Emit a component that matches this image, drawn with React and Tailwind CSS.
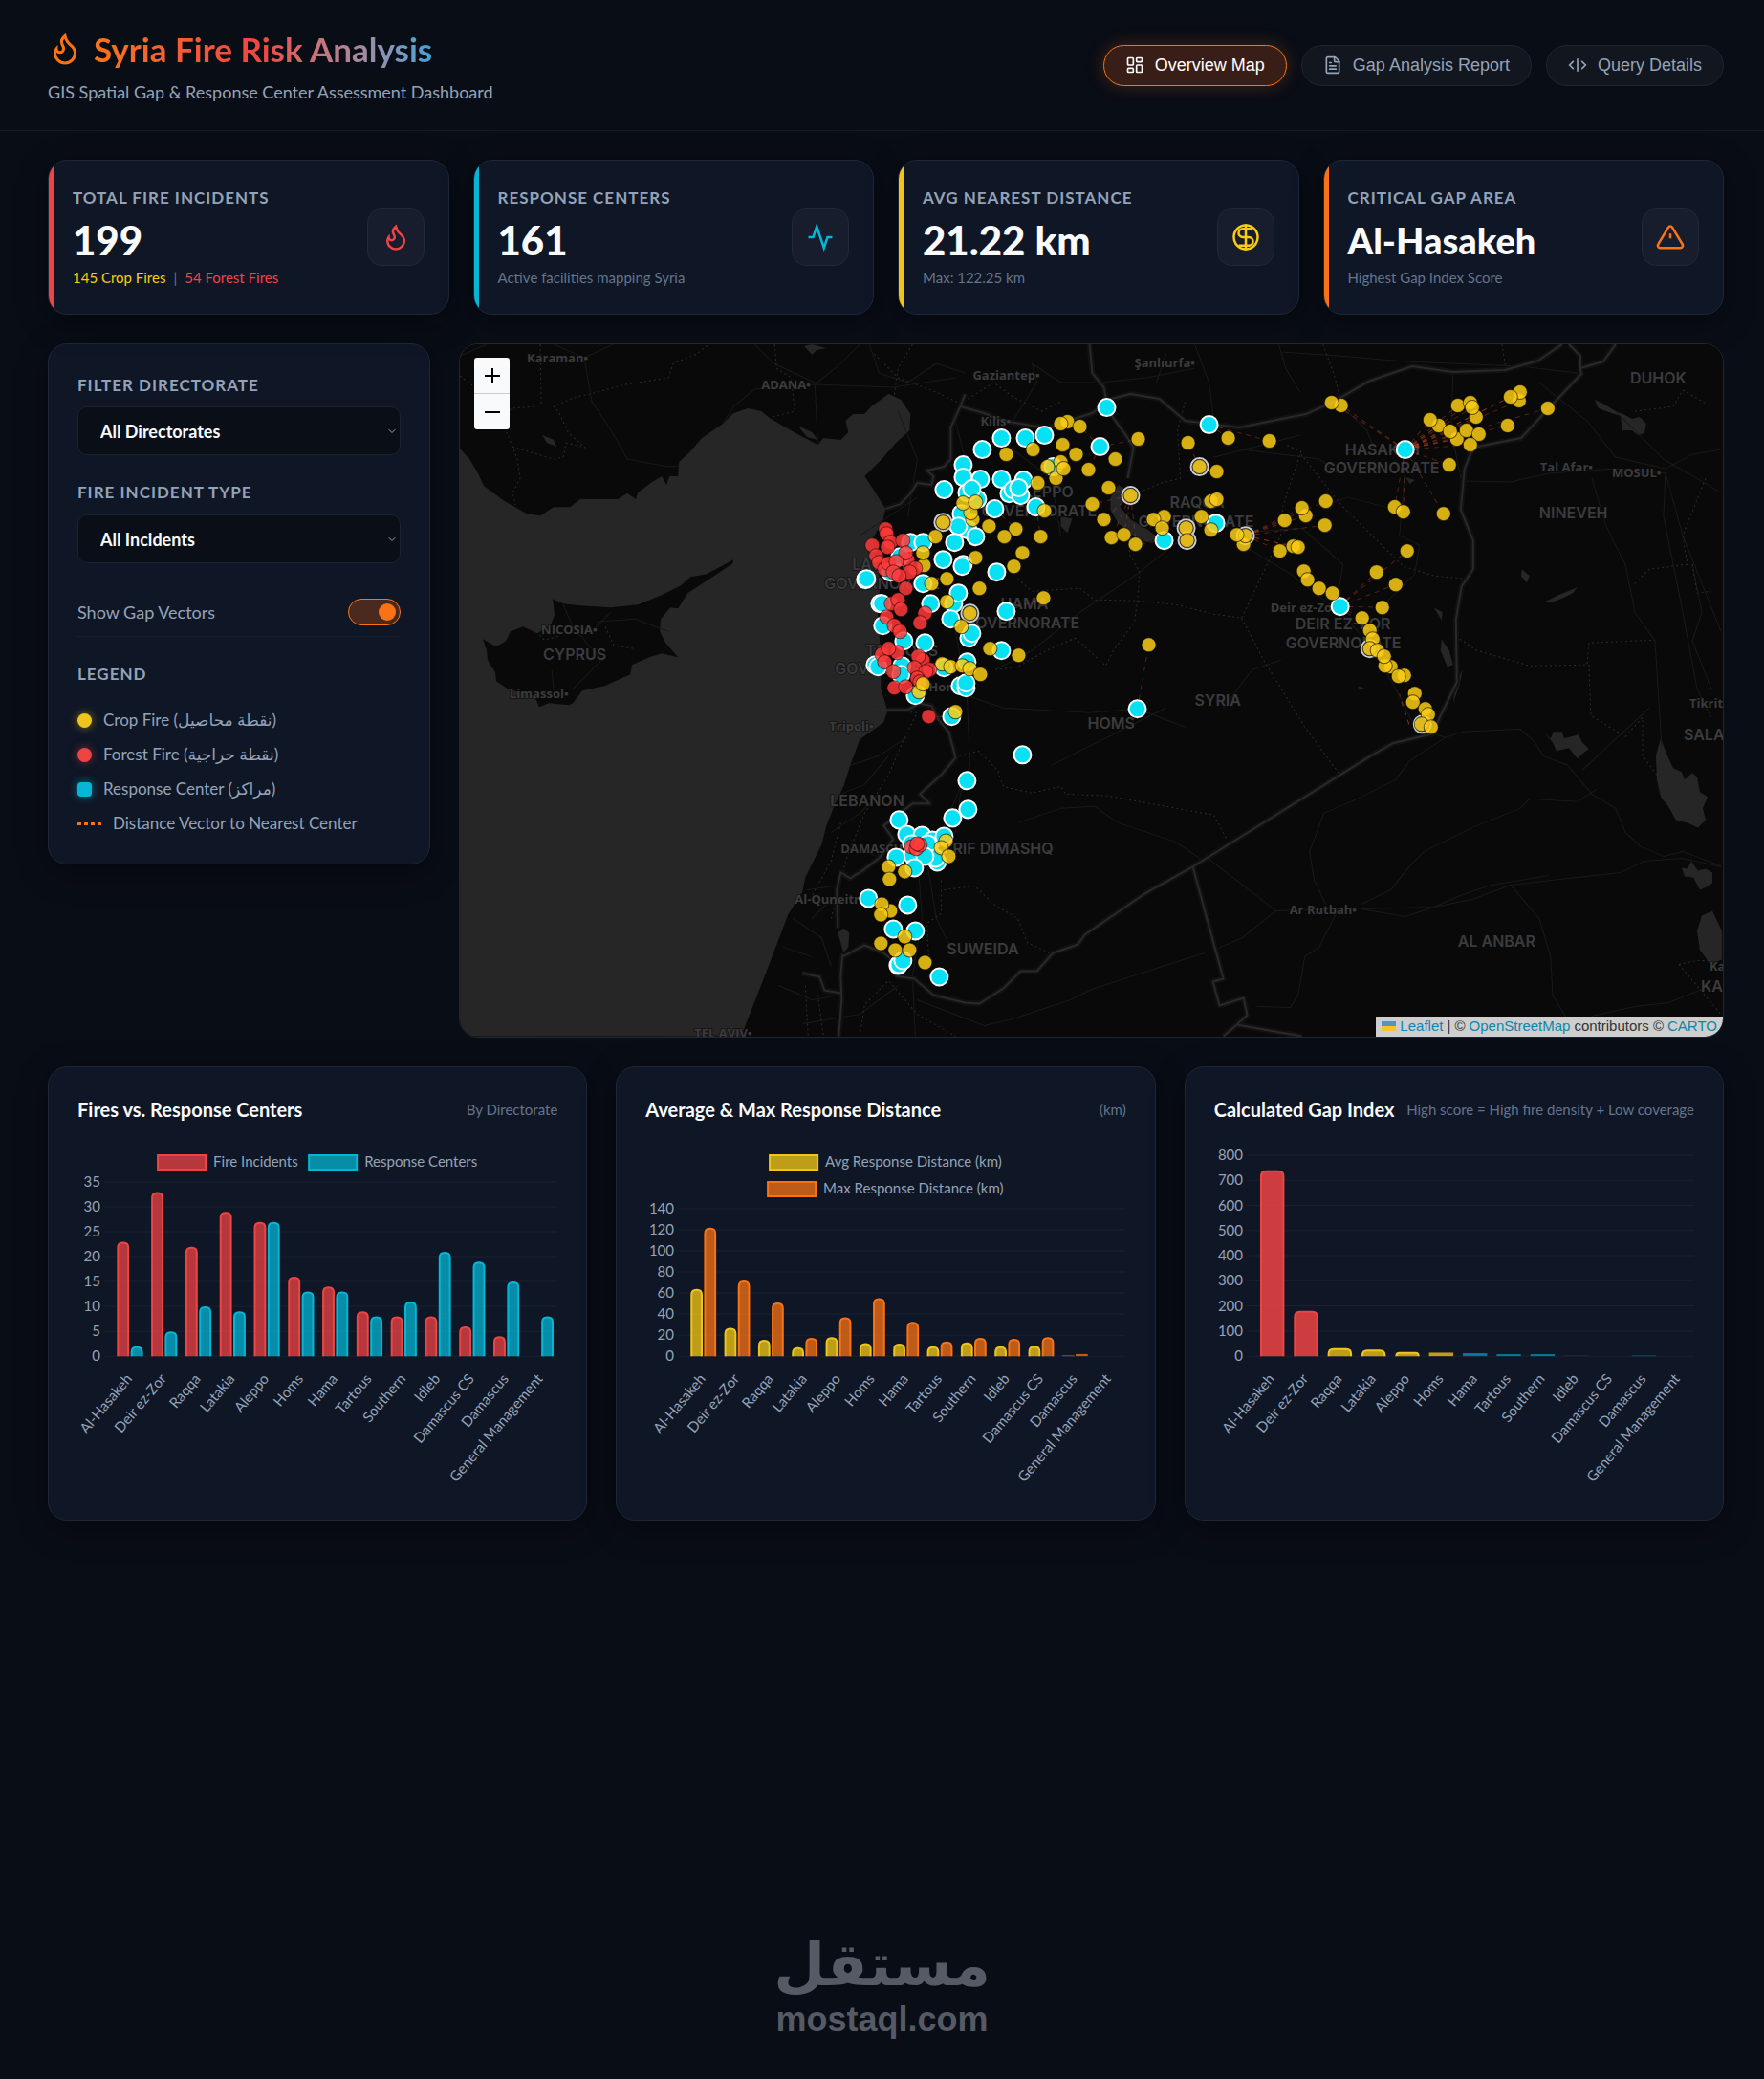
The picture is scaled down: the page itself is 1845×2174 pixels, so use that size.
import React, { useState } from "react";
import { LayoutDashboard, FileText, ChevronDown } from "lucide-react";

/* ---------------- DATA ---------------- */

const directorates = [
  "Al-Hasakeh", "Deir ez-Zor", "Raqqa", "Latakia", "Aleppo", "Homs", "Hama",
  "Tartous", "Southern", "Idleb", "Damascus CS", "Damascus", "General Management",
];

const RED = { fill: "rgba(239,68,68,0.75)", stroke: "#ef4444" };
const SOLID_RED = { fill: "rgba(239,68,68,0.85)", stroke: "#ef4444" };
const CYAN = { fill: "rgba(6,182,212,0.75)", stroke: "#06b6d4" };
const DIM_CYAN = { fill: "rgba(6,182,212,0.6)", stroke: "rgba(6,182,212,0.4)" };
const YELLOW = { fill: "rgba(250,204,21,0.75)", stroke: "#eec51c" };
const ORANGE = { fill: "rgba(249,115,22,0.75)", stroke: "#f97316" };
const DIM = { fill: "rgba(148,163,184,0.1)", stroke: "rgba(148,163,184,0.1)" };

const fireSeries = [
  { label: "Fire Incidents", color: RED, values: [23, 33, 22, 29, 27, 16, 14, 9, 8, 8, 6, 4, 0] },
  { label: "Response Centers", color: CYAN, values: [2, 5, 10, 9, 27, 13, 13, 8, 11, 21, 19, 15, 8] },
];

const distanceSeries = [
  { label: "Avg Response Distance (km)", color: YELLOW, values: [64, 27, 15.5, 8.5, 18, 12.5, 12, 9.5, 13, 9.5, 10, 0.5, 0] },
  { label: "Max Response Distance (km)", color: ORANGE, values: [122, 72, 51, 17.5, 37, 55, 32.5, 14, 17.5, 16.5, 18, 2, 0] },
];

const gapSeries = [
  {
    label: "Gap Index",
    colors: [SOLID_RED, SOLID_RED, YELLOW, YELLOW, YELLOW, YELLOW, DIM_CYAN, DIM_CYAN, DIM_CYAN, DIM, DIM, DIM_CYAN, DIM],
    values: [740, 180, 32, 26, 17, 14, 12, 8, 8, 4, 0, 2, 0],
  },
];

/* ---------------- MAP DATA ---------------- */

const sheet = (ox, oy, sx, sy, pts) =>
  pts.map(([x, y]) => [Math.round(ox + x / sx), Math.round(oy + y / sy)]);

const centers = [
  ...sheet(880, 350, 3, 3, [
    [835, 228], [1154, 281], [813, 352], [580, 325], [640, 314], [505, 325], [445, 359], [385, 408],
    [437, 453], [385, 446], [505, 453], [573, 457], [325, 487], [430, 515], [397, 495], [411, 483],
    [527, 497], [540, 487], [565, 505], [557, 480], [482, 547], [612, 540], [378, 562], [400, 612],
    [370, 600], [422, 633], [357, 652], [220, 652], [257, 652], [322, 704], [383, 721], [380, 725],
    [185, 697], [490, 745], [78, 769], [81, 765], [258, 779], [155, 745], [122, 842], [128, 842],
    [283, 842], [355, 842], [370, 809], [344, 891], [520, 866], [133, 911], [197, 960], [265, 967],
    [403, 950], [411, 936], [505, 990], [396, 1027], [107, 1034], [117, 1042], [192, 1038],
    [188, 1065], [325, 1045], [235, 1132], [376, 1102], [393, 1106], [393, 1092], [348, 1198],
    [1015, 645], [1175, 592], [929, 1174], [665, 415],
  ]),
  ...sheet(1270, 350, 2.8, 3, [[559, 359], [369, 853]]),
  ...sheet(840, 740, 3, 3, [
    [689, 146], [516, 228], [520, 319], [471, 344], [302, 352], [328, 397], [374, 400], [408, 415],
    [445, 402], [343, 425], [345, 462], [400, 450], [392, 425], [295, 468], [422, 484], [417, 472],
    [385, 465], [352, 502], [208, 596], [329, 619], [284, 693], [355, 700], [299, 806], [302, 803],
    [314, 791], [430, 844],
  ]),
];

const ringed = [
  ...sheet(880, 350, 3, 3, [[322, 588], [910, 505], [1125, 413], [1083, 607], [1087, 646], [404, 873]]),
  ...sheet(1270, 350, 2.8, 3, [[92, 629], [457, 985], [610, 1222]]),
];

const cropFires = [
  ...sheet(880, 350, 3, 3, [
    [710, 272], [691, 278], [749, 289], [697, 345], [738, 375], [603, 359], [520, 375], [932, 326],
    [862, 390], [689, 400], [649, 413], [674, 450], [700, 419], [618, 465], [776, 423], [839, 480],
    [790, 532], [824, 580], [850, 637], [888, 626], [925, 656], [640, 553], [415, 578], [408, 557],
    [384, 528], [423, 525], [464, 600], [550, 608], [513, 634], [626, 633], [569, 683], [543, 727],
    [423, 698], [296, 634], [260, 723], [258, 683], [332, 765], [284, 779], [434, 795], [332, 837],
    [637, 826], [378, 914], [468, 983], [557, 1005], [318, 1031], [344, 1042], [382, 1038],
    [404, 1046], [438, 1065], [359, 1182], [967, 971], [1090, 338], [1180, 428], [1160, 521],
    [1180, 517], [1132, 570], [1162, 613], [1015, 570], [981, 580], [1007, 607], [322, 588],
    [910, 505], [1125, 413], [1083, 607], [1087, 646], [404, 873],
  ]),
  ...sheet(1270, 350, 2.8, 3, [
    [373, 221], [345, 214], [41, 323], [163, 334], [658, 285], [632, 266], [713, 221], [751, 213],
    [766, 257], [755, 228], [710, 328], [692, 304], [740, 300], [775, 312], [751, 345], [892, 208],
    [896, 179], [867, 195], [978, 232], [859, 285], [688, 409], [671, 562], [530, 540], [555, 554],
    [328, 521], [268, 567], [258, 543], [208, 581], [324, 596], [86, 656], [92, 631], [67, 627],
    [194, 679], [231, 664], [246, 667], [262, 742], [275, 768], [307, 795], [348, 810], [565, 679],
    [475, 743], [531, 783], [492, 855], [433, 888], [457, 928], [464, 953], [457, 985], [480, 990],
    [517, 1040], [502, 1037], [499, 1009], [557, 1069], [541, 1072], [587, 1124], [583, 1151],
    [619, 1172], [628, 1192], [608, 1222], [635, 1230],
  ]),
  ...sheet(840, 740, 3, 3, [
    [449, 418], [434, 438], [459, 465], [269, 498], [272, 536], [322, 514], [276, 637], [250, 614],
    [246, 649], [246, 739], [322, 717], [291, 758], [336, 758], [385, 799],
  ]),
];

const forestFires = [
  ...sheet(880, 350, 3, 3, [
    [141, 610], [145, 623], [155, 650], [195, 645], [100, 660], [146, 667], [112, 692], [120, 713],
    [210, 705], [205, 685], [137, 735], [150, 718], [175, 712], [234, 733], [215, 745], [165, 745],
    [183, 756], [205, 795], [158, 843], [180, 830], [190, 861], [145, 885], [265, 873], [250, 904],
    [168, 912], [186, 929], [178, 997], [130, 1003], [150, 983], [137, 1027], [257, 1020],
    [243, 1008], [164, 1056], [230, 1045], [278, 1049], [267, 1057], [239, 1078], [250, 1090],
    [168, 1106], [205, 1103], [276, 1196],
  ]),
  ...sheet(840, 740, 3, 3, [[341, 436], [357, 440], [368, 428], [359, 427]]),
];

// crop fires that sit on top of the forest cluster near Homs
const lateCropFires = sheet(880, 350, 3, 3, [[245, 1118], [257, 1095]]);

// [center, fires served by that center]
const vectors = [
  [[1470, 470], [[1393, 421], [1403, 424], [1496, 439], [1505, 445], [1525, 424], [1538, 421], [1540, 426], [1544, 436], [1517, 451], [1524, 459], [1534, 450], [1547, 454], [1538, 465], [1580, 415], [1589, 419], [1590, 410], [1619, 427], [1577, 445], [1516, 486], [1510, 537], [1459, 530], [1468, 535]]],
  [[1401, 634], [[1472, 576], [1440, 598], [1460, 611], [1446, 635], [1425, 646], [1433, 659]]],
  [[1303, 560], [[1387, 524], [1362, 531], [1366, 539], [1344, 544], [1386, 549], [1339, 576], [1352, 571], [1358, 572]]],
  [[1265, 444], [[1285, 458], [1328, 461]]],
  [[1151, 467], [[1191, 459], [1130, 446], [1139, 491]]],
  [[1183, 518], [[1143, 527], [1155, 543], [1163, 562], [1176, 559], [1160, 510], [1189, 569]]],
  [[1218, 565], [[1189, 569]]],
  [[1255, 488], [[1243, 463]]],
  [[1190, 741], [[1202, 674]]],
  [[1053, 639], [[1092, 625]]],
  [[1084, 530], [[1089, 561]]],
  [[1041, 532], [[1063, 553]]],
  [[996, 749], [[972, 749]]],
  [[1474, 757], [[1466, 734], [1464, 725]]],
];

const thickBorders = [
  "M927 532L942 527L952 517L960 505L975 507L977 498L970 492L988 488L995 480L995 447L1005 425L1010 412",
  "M1005 425L1030 432L1050 440L1097 448L1127 437L1143 432L1163 417L1183 412L1213 417L1240 440L1280 445L1297 447L1341 438L1366 433L1395 420L1431 399L1477 383L1520 389L1574 387L1609 377L1634 360",
  "M1641 360L1653 372L1653 385L1677 378L1690 360",
  "M1653 385L1654 391L1620 427L1591 458L1541 468L1532 490L1528 533L1541 565L1541 595L1529 613L1523 647L1524 713L1506 750L1499 767L1457 777L1434 790L1248 906L1198 934L1135 977L1128 987L1102 996L1085 1015L1068 1015L1050 1033L1025 1049L1010 1048L977 1040L957 1023L937 1020",
  "M1248 906L1280 1023L1269 1026L1276 1051L1301 1043L1305 1061L1294 1071L1280 1083",
  "M1294 1071L1362 1083",
  "M929 742L950 742L962 735L975 738L982 752L993 765L1000 792L985 810L963 830L973 840L955 840L925 863L935 877L920 897L903 910L890 918L880 912L876 930L877 970",
  "M882 997L880 1020L881 1045L878 1083",
  "M882 1000L905 988L925 996L937 1006L937 1020",
  "M840 1017L858 1021L863 1035L880 1038",
  "M1140 360L1143 390L1155 405L1160 430L1178 455L1186 468L1180 500",
];

const dashedBorders = [
  "M566 360L567 422L560 425L535 427L530 450L537 467L542 480L545 500L537 515L540 528",
  "M482 393L495 403",
  "M537 467L580 480L590 478L593 463L613 468L595 452L585 430L580 425L603 415L618 412L655 402L700 395L705 380L730 370L742 360",
  "M811 360L813 385L828 395L832 430L808 436",
  "M955 360L940 385L935 420L905 440",
  "M915 370L940 395L980 410L1005 422L1040 400L1060 415L1090 430L1110 420",
  "M1240 420L1232 450L1235 500L1215 505L1180 520L1182 580L1192 597L1191 620L1187 650L1165 680L1157 696L1125 667L1095 680L1065 697L1042 700",
  "M1065 605L1080 618L1130 615L1145 627L1190 628L1230 632L1270 642L1299 646L1340 560L1342 530L1361 472L1345 465",
  "M1361 475L1405 530L1468 592L1500 602L1533 605",
  "M1299 646L1322 690L1365 760L1402 810",
  "M1004 790L1024 785L1044 805L1050 822L1080 829L1110 822L1115 830L1160 832L1270 852L1284 878",
  "M988 930L1020 926L1040 945L1065 960L1075 985L1098 996",
  "M985 920L985 955L970 965L972 1000",
  "M562 660L570 669L585 665M634 655L643 675L665 678",
  "M903 740L960 745L945 775L930 810L905 850L885 900L870 960",
  "M1527 668L1545 680L1600 696L1660 695L1662 672L1731 669",
  "M1662 695L1664 748L1700 770L1718 750L1718 790L1733 810",
  "M1784 500L1760 560L1765 590L1725 595L1708 612",
  "M1770 590L1775 620L1790 618",
  "M1756 1008L1775 1004L1790 1004M1756 1008L1800 1060",
  "M1384 360L1395 390L1402 415",
  "M1571 360L1575 385",
  "M1710 430L1750 425L1760 408L1790 425",
  "M900 1083L905 1050L930 1025L960 1060L1000 1083",
  "M843 1030L846 1083M856 1040L862 1083M848 940L870 900L880 860",
];

const roads = [
  "M482 372L510 360M580 360L612 374L620 420L640 450L657 480L700 488L711 487",
  "M612 374L642 360",
  "M757 443L768 425L790 407L853 402L935 405L1000 395",
  "M853 402L856 463M853 402L880 380L900 360M790 360L810 380L853 400",
  "M910 360L920 390L950 400L980 380L1010 390",
  "M1000 440L1010 480L1000 540L990 600L1000 660L1012 727L1015 800L985 870L950 900",
  "M1012 727L1050 740L1140 745L1190 741L1240 760",
  "M1042 700L1080 680L1130 640L1190 600L1240 560",
  "M1065 860L1110 845L1145 843L1170 860L1230 880L1255 897",
  "M1100 800L1180 760L1220 740",
  "M960 1045L1030 1072L1060 1065L1120 1045L1145 1033L1260 996",
  "M1015 800L1005 830L1000 870L970 890",
  "M1300 470L1380 480L1400 495",
  "M1403 424L1430 450L1440 475M1270 478L1310 468L1360 455",
  "M1340 368L1400 372L1470 378L1590 383L1650 390",
  "M1520 389L1518 450L1528 500",
  "M1528 503L1580 504L1620 495L1690 490L1742 495",
  "M1610 400L1660 440L1690 478L1742 490L1770 475L1800 470",
  "M1742 494L1740 540L1760 640L1775 720L1790 750",
  "M1742 494L1760 560L1800 660",
  "M1690 430L1740 480L1800 515",
  "M1335 350L1345 385L1360 410",
  "M1380 530L1410 520L1450 530M1410 660L1400 620L1405 590L1362 552L1310 556",
  "M1300 570L1350 600L1375 620L1400 638L1430 670L1460 720L1480 760L1512 771",
  "M1470 490L1464 560L1485 570L1480 600L1450 630L1440 665",
  "M1512 771L1530 765L1590 762L1605 775L1614 790L1640 800L1665 830L1690 845L1700 870L1716 885L1740 895L1760 890L1800 905",
  "M1512 771L1475 795L1460 815L1420 835L1385 850L1370 890L1375 920L1387 945",
  "M1424 945L1455 930L1475 905L1490 890L1540 865L1590 845L1600 835L1650 838L1670 825",
  "M1424 950L1500 948L1540 940L1580 925L1640 918L1695 912L1720 900L1760 897L1800 906",
  "M1424 950L1470 958L1500 948L1530 935L1560 925L1620 915",
  "M1265 898L1300 925L1335 952L1400 950L1380 990L1365 1000L1358 1040L1350 1053L1315 1052",
  "M1270 993L1300 980L1335 952",
  "M1580 925L1610 960L1622 1000L1624 1040L1638 1063",
  "M1665 1062L1710 1052L1745 1048L1790 1030",
  "M1655 805L1725 740",
  "M1665 500L1680 550L1700 590L1710 640L1731 670L1738 780",
  "M1770 590L1780 640L1770 670L1790 720",
  "M1280 740L1310 700L1340 690",
  "M590 632L600 655L620 660L640 640M600 655L630 690L600 720M625 650L665 647L700 660M578 700L580 720",
  "M890 800L920 790L950 770M880 830L905 820L930 790M870 870L900 850L920 830M845 930L880 925M850 960L870 940M830 960L860 980L870 1010M820 990L850 1000M815 1030L850 1045L880 1040M840 1070L900 1060L940 1030",
  "M905 890L930 900L960 890M960 890L965 960L955 1020L958 1083M970 900L980 960L1000 1000",
  "M900 560L930 540L960 520M940 430L960 480L950 540M1020 460L1060 470L1100 500L1110 560",
  "M1080 380L1110 400L1150 400L1200 395L1250 385M1210 400L1220 370M1060 440L1085 400L1080 380",
  "M1250 360L1265 400L1270 440",
];

const lakes = [
  "M1170 507L1162 520L1162 533L1170 547L1183 558L1200 567L1213 563L1200 553L1183 543L1172 530L1178 512Z",
  "M1110 540L1122 542L1117 557L1110 550Z",
  "M877 975L883 970L889 975L888 990L883 996Z",
  "M1737 772L1744 790L1750 803L1759 807L1762 815L1770 808L1775 812L1778 828L1786 833L1781 845L1784 857L1776 865L1765 860L1753 857L1745 843L1737 833L1733 815L1732 790Z",
  "M1616 767L1622 772L1625 765L1634 765L1636 772L1651 768L1655 776L1662 783L1655 788L1650 793L1641 782L1628 785L1624 776Z",
  "M1759 907L1765 908L1769 900L1776 910L1784 908L1791 912L1791 923L1785 927L1778 930L1771 917L1762 916Z",
  "M1780 957L1791 952L1801 973L1801 1003L1789 1008L1778 993L1775 973Z",
  "M1668 418L1677 422L1690 430L1700 434L1707 438L1715 436L1722 443L1720 453L1713 455L1707 450L1697 450L1695 435L1680 430L1672 427Z",
  "M1508 668L1516 680L1520 695L1514 697L1507 680Z",
  "M1523 713L1530 700L1527 715L1520 735Z",
  "M1592 595L1600 602L1597 609L1591 602Z",
  "M1616 629L1630 622L1640 618L1650 614L1645 620L1635 625L1622 630Z",
  "M1500 635L1509 640L1508 648Z",
  "M1420 717L1432 721L1422 720Z",
  "M568 455L580 460L583 467L573 463Z",
  "M835 445L850 452L856 460L845 457Z",
  "M842 362L850 360L865 364L855 366L850 371Z",
  "M1470 499L1480 502L1475 506Z",
];

// x is the left edge of the label, region names are set larger and carry no dot
const places = [
  ["Karaman", 552, 379, 0], ["ADANA", 797, 407, 0], ["Şanlıurfa", 1187, 384, 0],
  ["Gaziantep", 1018, 397, 0], ["Kilis", 1026, 445, 0], ["NICOSIA", 567, 663, 0],
  ["Limassol", 534, 730, 0], ["Tal Afar", 1611, 493, 0], ["MOSUL", 1686, 499, 0],
  ["Deir ez-Zor", 1329, 640, 0], ["Tripoli", 868, 764, 0], ["Homs", 972, 723, 0],
  ["DAMASCUS", 880, 892, 0], ["Al-Quneitra", 832, 945, 0], ["Ar Rutbah", 1349, 956, 0],
  ["Tikrit", 1767, 740, 0], ["TEL AVIV", 727, 1084, 0],
  ["CYPRUS", 569, 690, 1], ["DUHOK", 1705, 401, 1], ["NINEVEH", 1610, 542, 1],
  ["HASAKEH", 1407, 476, 1], ["GOVERNORATE", 1385, 495, 1], ["ALEPPO", 1060, 520, 1],
  ["GOVERNORATE", 1027, 540, 1], ["RAQQA", 1224, 531, 1], ["GOVERNORATE", 1191, 551, 1],
  ["LATAKIA", 892, 596, 1], ["GOVERNORATE", 863, 616, 1], ["HAMA", 1047, 637, 1],
  ["GOVERNORATE", 1009, 657, 1], ["TARTOUS", 906, 686, 1], ["GOVERNORATE", 874, 705, 1],
  ["DEIR EZ-ZOR", 1355, 658, 1], ["GOVERNORATE", 1345, 678, 1], ["SYRIA", 1250, 738, 1],
  ["HOMS", 1138, 762, 1], ["LEBANON", 869, 843, 1], ["RIF DIMASHQ", 997, 893, 1],
  ["SUWEIDA", 991, 998, 1], ["AL ANBAR", 1525, 990, 1], ["SALA", 1761, 774, 1],
  ["Ka", 1788, 1015, 2], ["KA", 1779, 1036, 1],
];

/* ---------------- ICONS ---------------- */

function StrokeIcon({ className, children }) {
  return (
    <svg viewBox="0 0 24 24" fill="none" stroke="currentColor" strokeWidth="2" className={className}>
      {children}
    </svg>
  );
}

function FlameIcon({ className }) {
  return (
    <StrokeIcon className={className}>
      <path d="M8.5 14.5A2.5 2.5 0 0 0 11 12c0-1.38-.5-2-1-3-1.072-2.143-.224-4.054 2-6 .5 2.5 2 4.9 4 6.5 2 1.6 3 3.5 3 5.5a7 7 0 1 1-14 0c0-1.153.433-2.294 1-3a2.5 2.5 0 0 0 2.5 2.5z" />
    </StrokeIcon>
  );
}

function PulseIcon({ className }) {
  return (
    <StrokeIcon className={className}>
      <polyline points="22 12 18 12 15 21 9 3 6 12 2 12" />
    </StrokeIcon>
  );
}

function DistanceIcon({ className }) {
  return (
    <StrokeIcon className={className}>
      <circle cx="12" cy="12" r="10" />
      <path d="M12 1v22M17 5H9.5a3.5 3.5 0 0 0 0 7h5a3.5 3.5 0 0 1 0 7H6" />
    </StrokeIcon>
  );
}

function WarningIcon({ className }) {
  return (
    <StrokeIcon className={className}>
      <path d="M10.29 3.86 1.82 18a2 2 0 0 0 1.71 3h16.94a2 2 0 0 0 1.71-3L13.71 3.86a2 2 0 0 0-3.42 0z" />
      <path d="M12 9v4" />
    </StrokeIcon>
  );
}

function QueryIcon({ className }) {
  return (
    <StrokeIcon className={className}>
      <path d="M17 17l5-5-5-5M7 7l-5 5 5 5M12 4v16" />
    </StrokeIcon>
  );
}

/* ---------------- STAT CARDS ---------------- */

function StatCard({ label, value, valueClass, bar, icon, children }) {
  return (
    <div className="relative flex h-[162px] items-center justify-between overflow-hidden rounded-[20px] border border-[#1f2736] bg-[#0f1626] px-[25px] shadow-[0_8px_32px_rgba(0,0,0,0.4)]">
      <div className={`absolute inset-y-0 left-0 w-[5px] ${bar}`} />
      <div>
        <div className="text-[17px] leading-[22px] font-bold tracking-[1px] text-[#94a3b8] uppercase">{label}</div>
        <div className={`mt-[8px] mb-[4px] font-black text-[#f8fafc] ${valueClass}`}>{value}</div>
        <div className="text-[15px] leading-[20px] text-[#64748b]">{children}</div>
      </div>
      <div className="flex size-[60px] items-center justify-center rounded-[15px] border border-[#212838] bg-[#171d2d]">
        {icon}
      </div>
    </div>
  );
}

/* ---------------- MAP ---------------- */

function Dot({ at, r, className }) {
  return <circle cx={at[0]} cy={at[1]} r={r} className={className} />;
}

function FireMap({ showVectors }) {
  const crop = "fill-[#facc15]/85 stroke-black/60 stroke-1";
  const forest = "fill-[#ff3a3a]/85 stroke-black/50 stroke-1";
  const center = "fill-[#06e1f3] stroke-[#f8fafc] stroke-2";

  return (
    <div className="relative min-w-0 flex-1 overflow-hidden rounded-[20px] border border-[#1f2736] bg-[#090909]">
      <svg viewBox="482 360 1320 723" className="block h-auto w-full" role="img" aria-label="Fire and response center map">
        <rect x="482" y="360" width="1320" height="723" fill="#090909" />
        <path
          fill="#262626"
          d="M482 469L492 480L500 493L507 508L527 523L538 529L552 537L566 539L580 530L597 530L608 522L627 522L647 522L657 516L666 522L668 515L683 504L693 498L698 507L701 498L710 498L711 483L722 473L735 458L757 443L768 432L783 427L797 430L807 438L833 453L856 465L862 458L880 460L888 452L885 440L893 433L905 433L912 425L930 412L943 418L953 433L952 450L938 463L923 480L905 498L913 510L927 532L923 547L913 563L918 590L922 610L918 633L920 660L922 687L922 720L929 743L925 755L900 773L890 800L883 822L873 843L865 863L860 883L843 917L840 932L825 956L801 1019L776 1083L482 1083Z"
        />
        <path
          fill="#090909"
          d="M579 626L590 631L607 633L640 635L668 632L693 622L713 612L723 603L740 600L768 585L767 589L743 605L720 620L710 636L702 635L692 647L691 660L697 672L710 687L693 683L680 687L662 695L660 705L633 717L610 722L600 735L596 737L575 735L565 739L560 728L532 720L520 712L519 703L511 690L510 680L506 668L520 676L530 670L535 660L548 655L563 662L577 653L581 643Z"
        />
        {lakes.map((d) => (
          <path key={d} d={d} fill="#262626" />
        ))}
        <g fill="none" strokeLinejoin="round">
          {roads.map((d) => (
            <path key={d} d={d} stroke="#1a1a1a" />
          ))}
          {dashedBorders.map((d) => (
            <path key={d} d={d} stroke="#2d2d2d" strokeDasharray="2 3" />
          ))}
          {thickBorders.map((d) => (
            <path key={d} d={d} stroke="#111111" strokeWidth="6" />
          ))}
          {thickBorders.map((d) => (
            <path key={d} d={d} stroke="#292929" strokeWidth="2" />
          ))}
        </g>

        {places.map(([name, x, y, kind]) => (
          <text
            key={name + x}
            x={x}
            y={y}
            fill="#3b3b3e"
            stroke="#090909"
            strokeOpacity="0.5"
            strokeWidth="2"
            paintOrder="stroke"
            className={kind === 1 ? "font-['Inter'] text-[16px] font-semibold" : "font-['Open_Sans'] text-[13px] font-bold"}
          >
            {kind === 0 ? `${name}▪` : name}
          </text>
        ))}

        {showVectors &&
          vectors.map(([from, targets]) =>
            targets.map((to) => (
              <line
                key={`${from}-${to}`}
                x1={from[0]}
                y1={from[1]}
                x2={to[0]}
                y2={to[1]}
                stroke="#e0512f"
                strokeOpacity="0.35"
                strokeDasharray="5 5"
              />
            ))
          )}

        {centers.map((p, i) => <Dot key={i} at={p} r={9} className={center} />)}
        {ringed.map((p, i) => <Dot key={i} at={p} r={9} className="fill-[#4a4a4a] stroke-[#c9ccd4] stroke-2" />)}
        {cropFires.map((p, i) => <Dot key={i} at={p} r={7.5} className={crop} />)}
        {forestFires.map((p, i) => <Dot key={i} at={p} r={7.5} className={forest} />)}
        {lateCropFires.map((p, i) => <Dot key={i} at={p} r={7.5} className={crop} />)}
      </svg>

      {/* zoom control */}
      <div className="absolute top-[14px] left-[15px] flex w-[37px] flex-col overflow-hidden rounded-[3px] bg-[#f8fafc] text-black">
        <button aria-label="Zoom in" className="flex h-[38px] items-center justify-center border-b border-[#ccc]">
          <svg viewBox="0 0 16 16" className="size-4 stroke-current stroke-2"><path d="M8 0v16M0 8h16" /></svg>
        </button>
        <button aria-label="Zoom out" className="flex h-[37px] items-center justify-center">
          <svg viewBox="0 0 16 16" className="size-4 stroke-current stroke-2"><path d="M0 8h16" /></svg>
        </button>
      </div>

      {/* attribution */}
      <div className="absolute right-0 bottom-0 flex h-[21px] items-center gap-1 bg-[#cecece] px-[6px] font-['Liberation_Sans',sans-serif] text-[15px] text-[#333]">
        <svg viewBox="0 0 15 10" className="h-[10px] w-[15px]">
          <path d="M0 0h15v5H0z" fill="#5693bd" />
          <path d="M0 5h15v5H0z" fill="#f2c72a" />
        </svg>
        <a href="#leaflet" className="text-[#0f87ac]">Leaflet</a>
        <span>| ©</span>
        <a href="#osm" className="text-[#0f87ac]">OpenStreetMap</a>
        <span>contributors ©</span>
        <a href="#carto" className="text-[#0f87ac]">CARTO</a>
      </div>
    </div>
  );
}

/* ---------------- CHARTS ---------------- */

function roundedBar(x, y, w, h) {
  const r = Math.min(5, h);
  return `M${x} ${y + h}V${y + r}Q${x} ${y} ${x + r} ${y}H${x + w - r}Q${x + w} ${y} ${x + w} ${y + r}V${y + h}`;
}

function BarChart({ series, max, step, left, top, legend }) {
  const right = 502;
  const bottom = 227;
  const slot = (right - left) / directorates.length;
  const barWidth = (slot * 0.8) / series.length;
  const scale = (bottom - top) / max;
  const ticks = Array.from({ length: max / step + 1 }, (_, i) => i * step);

  return (
    <svg viewBox="0 0 502 368" className="mt-[16px] block h-auto w-full">
      {legend.map(({ x, y, index }) => (
        <g key={index}>
          <rect x={x} y={y} width="50" height="15" fill={series[index].color.fill} stroke={series[index].color.stroke} strokeWidth="2" />
          <text x={x + 58} y={y + 12} className="fill-[#94a3b8] text-[15px]">{series[index].label}</text>
        </g>
      ))}

      {ticks.map((t) => (
        <g key={t}>
          <line x1={left - 9} x2={right} y1={bottom - t * scale} y2={bottom - t * scale} stroke="#1a2131" />
          <text x={left - 13} y={bottom - t * scale + 5} textAnchor="end" className="fill-[#94a3b8] text-[15px]">{t}</text>
        </g>
      ))}

      {series.map((s, si) =>
        s.values.map((v, i) => {
          if (!v) return null;
          const color = s.colors ? s.colors[i] : s.color;
          const x = left + slot * (i + 0.1) + barWidth * (si + 0.05);
          const h = v * scale;
          // too flat for an outline
          if (h < 4) {
            return <rect key={`${si}-${i}`} x={x} y={bottom - h} width={barWidth * 0.9} height={h} fill={color.fill} />;
          }
          return (
            <path
              key={`${si}-${i}`}
              d={roundedBar(x + 1, bottom - h + 1, barWidth * 0.9 - 2, h - 1)}
              fill={color.fill}
              stroke={color.stroke}
              strokeWidth="2"
            />
          );
        })
      )}

      {directorates.map((name, i) => {
        const x = left + slot * (i + 0.5) + 3;
        return (
          <text key={name} x={x} y={251} textAnchor="end" transform={`rotate(-50 ${x} 251)`} className="fill-[#94a3b8] text-[15px]">
            {name}
          </text>
        );
      })}
    </svg>
  );
}

function ChartCard({ title, note, children }) {
  return (
    <section className="rounded-[20px] border border-[#1f2736] bg-[#0f1626] p-[30px] shadow-[0_8px_32px_rgba(0,0,0,0.4)]">
      <div className="flex h-[29px] items-center justify-between whitespace-nowrap">
        <h2 className="text-[20px] font-bold text-[#f8fafc]">{title}</h2>
        <span className="text-[15px] text-[#64748b]">{note}</span>
      </div>
      {children}
    </section>
  );
}

/* ---------------- DASHBOARD ---------------- */

const navButton = "flex items-center gap-[11px] rounded-full border px-[22px] py-[10px] font-['Liberation_Sans',sans-serif] text-[18px] leading-[21px]";
const navIdle = "border-[#20252f] bg-[#12161f] text-[#94a3b8]";
const sectionLabel = "block text-[17px] leading-[22px] font-bold tracking-[1px] text-[#94a3b8] uppercase";
const selectBox = "block h-[51px] w-full appearance-none rounded-[10px] border border-[#1b2230] bg-[#0a0e17] px-[23px] pt-[2px] text-[18px] font-bold text-[#f8fafc]";

export default function App() {
  const [showVectors, setShowVectors] = useState(true);

  return (
    <div className="flex min-h-screen flex-col bg-[#090d16] font-['Lato','DejaVu_Sans',sans-serif] text-[#f8fafc]">

      {/* HEADER */}
      <header className="flex h-[137px] items-center justify-between border-b border-[#161a27] pr-[42px] pl-[50px]">
        <div>
          <h1 className="flex items-center gap-[12px] text-[35px] leading-[46px] font-bold">
            <FlameIcon className="size-[36px] text-[#f97316]" />
            <span className="bg-linear-to-r from-[#f97316] via-[#ef4444] to-[#38a3d8] bg-clip-text text-transparent">
              Syria Fire Risk Analysis
            </span>
          </h1>
          <p className="mt-[10px] text-[18px] leading-[24px] text-[#94a3b8]">
            GIS Spatial Gap &amp; Response Center Assessment Dashboard
          </p>
        </div>
        <nav className="flex gap-[15px]">
          <button className={`${navButton} border-[#f97316] bg-[#391e18] text-white shadow-[0_0_18px_rgba(249,115,22,0.25)]`}>
            <LayoutDashboard className="size-5" />
            Overview Map
          </button>
          <button className={`${navButton} ${navIdle}`}>
            <FileText className="size-5" />
            Gap Analysis Report
          </button>
          <button className={`${navButton} ${navIdle}`}>
            <QueryIcon className="size-5" />
            Query Details
          </button>
        </nav>
      </header>

      <main className="flex flex-col gap-[30px] pt-[30px] pr-[42px] pl-[50px]">

        {/* STATS */}
        <div className="grid grid-cols-4 gap-[25px]">
          <StatCard label="Total Fire Incidents" value="199" valueClass="text-[42px] leading-[50px]" bar="bg-[#ef4444]" icon={<FlameIcon className="size-[30px] text-[#ef4444]" />}>
            <span className="text-[#facc15]">145 Crop Fires</span>
            <span className="mx-[8px]">|</span>
            <span className="text-[#ef4444]">54 Forest Fires</span>
          </StatCard>
          <StatCard label="Response Centers" value="161" valueClass="text-[42px] leading-[50px]" bar="bg-[#06b6d4]" icon={<PulseIcon className="size-[30px] text-[#06b6d4]" />}>
            Active facilities mapping Syria
          </StatCard>
          <StatCard label="Avg Nearest Distance" value="21.22 km" valueClass="text-[42px] leading-[50px]" bar="bg-[#eec51c]" icon={<DistanceIcon className="size-[30px] text-[#facc15]" />}>
            Max: 122.25 km
          </StatCard>
          <StatCard label="Critical Gap Area" value="Al-Hasakeh" valueClass="text-[38px] leading-[50px]" bar="bg-[#f97316]" icon={<WarningIcon className="size-[30px] text-[#f97316]" />}>
            Highest Gap Index Score
          </StatCard>
        </div>

        {/* FILTERS + MAP */}
        <div className="flex items-start gap-[30px]">
          <aside className="w-[400px] shrink-0 rounded-[20px] border border-[#1f2736] bg-[#0f1626] px-[30px] pt-[32px] pb-[30px] shadow-[0_8px_32px_rgba(0,0,0,0.4)]">
            <label htmlFor="directorate" className={sectionLabel}>Filter Directorate</label>
            <div className="relative mt-[11px]">
              <select id="directorate" className={selectBox}>
                <option>All Directorates</option>
                {directorates.map((d) => <option key={d}>{d}</option>)}
              </select>
              <ChevronDown className="pointer-events-none absolute top-[20px] right-[3px] size-3 text-[#94a3b8]" />
            </div>

            <label htmlFor="incident" className={`${sectionLabel} mt-[28px]`}>Fire Incident Type</label>
            <div className="relative mt-[12px]">
              <select id="incident" className={selectBox}>
                <option>All Incidents</option>
                <option>Crop Fire</option>
                <option>Forest Fire</option>
              </select>
              <ChevronDown className="pointer-events-none absolute top-[20px] right-[3px] size-3 text-[#94a3b8]" />
            </div>

            <div className="mt-[26px] flex items-center justify-between border-b border-[#181f2e] py-[11px]">
              <label htmlFor="vectors" className="text-[18px] leading-[28px] text-[#94a3b8]">Show Gap Vectors</label>
              <input
                id="vectors"
                type="checkbox"
                checked={showVectors}
                onChange={(e) => setShowVectors(e.target.checked)}
                className="flex h-[28px] w-[55px] appearance-none items-center rounded-full border border-[#64748b] px-[4px] before:size-[18px] before:rounded-full before:bg-[#64748b] checked:justify-end checked:border-[#f97316] checked:bg-[#4a2a1e] checked:before:bg-[#f97316]"
              />
            </div>

            <h3 className={`${sectionLabel} mt-[28px]`}>Legend</h3>
            <ul className="mt-[25px] flex flex-col gap-[12px] text-[17px] leading-[24px] text-[#94a3b8]">
              <li className="flex items-center gap-[12px]">
                <span className="size-[15px] rounded-full bg-[#eec51c] shadow-[0_0_10px_rgba(250,204,21,0.5)]" />
                Crop Fire (نقطة محاصيل)
              </li>
              <li className="flex items-center gap-[12px]">
                <span className="size-[15px] rounded-full bg-[#ef4444] shadow-[0_0_10px_rgba(239,68,68,0.5)]" />
                Forest Fire (نقطة حراجية)
              </li>
              <li className="flex items-center gap-[12px]">
                <span className="size-[15px] rounded-[4px] bg-[#06b6d4] shadow-[0_0_10px_rgba(6,182,212,0.6)]" />
                Response Center (مراكز)
              </li>
              <li className="flex items-center gap-[12px]">
                <svg viewBox="0 0 25 3" className="h-[3px] w-[25px]">
                  <path d="M0 1.5h25" stroke="#f97316" strokeWidth="3" strokeDasharray="4 3" />
                </svg>
                Distance Vector to Nearest Center
              </li>
            </ul>
          </aside>

          <FireMap showVectors={showVectors} />
        </div>

        {/* CHARTS */}
        <div className="grid grid-cols-3 gap-[30px]">
          <ChartCard title="Fires vs. Response Centers" note="By Directorate">
            <BarChart series={fireSeries} max={35} step={5} left={37} top={45} legend={[{ x: 84, y: 17, index: 0 }, { x: 242, y: 17, index: 1 }]} />
          </ChartCard>
          <ChartCard title="Average & Max Response Distance" note="(km)">
            <BarChart series={distanceSeries} max={140} step={20} left={43} top={73} legend={[{ x: 130, y: 17, index: 0 }, { x: 128, y: 45, index: 1 }]} />
          </ChartCard>
          <ChartCard title="Calculated Gap Index" note="High score = High fire density + Low coverage">
            <BarChart series={gapSeries} max={800} step={100} left={43} top={17} legend={[]} />
          </ChartCard>
        </div>
      </main>

      {/* WATERMARK */}
      <footer className="mt-auto flex flex-col items-center pb-[42px] text-[#555a64]">
        <div lang="ar" className="font-['DejaVu_Sans'] text-[62px] leading-[74px] font-bold">مستقل</div>
        <div className="font-['Liberation_Sans',sans-serif] text-[36px] leading-[40px] font-bold">mostaql.com</div>
      </footer>
    </div>
  );
}
